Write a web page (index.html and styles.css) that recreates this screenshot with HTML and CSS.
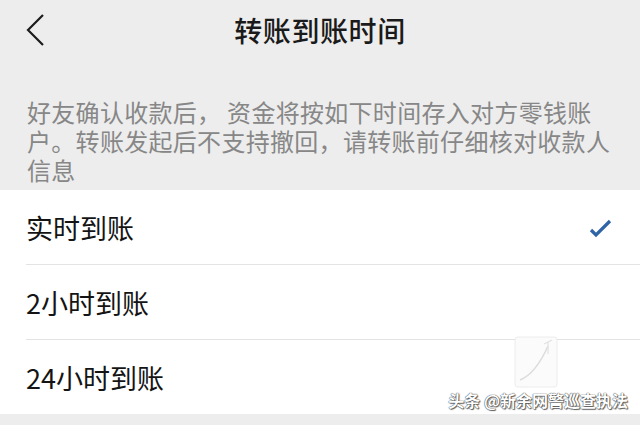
FILE: index.html
```html
<!DOCTYPE html>
<html lang="zh-CN">
<head>
    <meta charset="UTF-8">
    <meta name="viewport" content="width=device-width, initial-scale=1.0">
    <title>转账到账时间</title>
    <link rel="stylesheet" href="styles.css">
</head>
<body>

    <!-- Top bar with back button -->
    <div class="topbar">
        <a class="back" href="#">
            <svg width="20" height="34" viewBox="0 0 20 34">
                <polyline points="17,2 2,17 17,32" fill="none" stroke="#1c1c1c" stroke-width="2.2" stroke-linejoin="miter"/>
            </svg>
        </a>
        <div class="title">转账到账时间</div>
    </div>

    <p class="note">好友确认收款后， 资金将按如下时间存入对方零钱账户。转账发起后不支持撤回，请转账前仔细核对收款人信息</p>

    <!-- Arrival time options -->
    <ul class="options">
        <li class="option">
            <span>实时到账</span>
            <svg class="check" width="24" height="20" viewBox="0 0 24 20">
                <polyline points="2,11 7,16 21,2" fill="none" stroke="#2f64a6" stroke-width="3.2"/>
            </svg>
        </li>
        <li class="option"><span>2小时到账</span></li>
        <li class="option"><span>24小时到账</span></li>
    </ul>

    <div class="watermark">
        <svg class="wm-logo" width="44" height="52" viewBox="0 0 44 52">
            <rect x="1" y="1" width="42" height="50" rx="3" fill="#fbfbfb" stroke="#ececec"/>
            <path d="M6 44 C16 40 26 28 34 10" fill="none" stroke="#dcdcdc" stroke-width="1.5"/>
            <path d="M30 8 L38 4 M34 6 L34 18" fill="none" stroke="#e2e2e2" stroke-width="1.2"/>
        </svg>
        <div class="wm-text">头条 @新余网警巡查执法</div>
    </div>

</body>
</html>
```

FILE: styles.css
```css
body {
    margin: 0;
    background-color: #ededed;
    font-family: "Noto Sans CJK SC", "Noto Sans", sans-serif;
    position: relative;
    height: 425px;
    overflow: hidden;
}
.topbar {
    height: 60px;
    display: flex;
    align-items: center;
    justify-content: center;
    position: relative;
}
.back {
    position: absolute;
    left: 26px;
    top: 13px;
    display: block;
    height: 34px;
}
.title {
    font-size: 28px;
    font-weight: 500;
    color: #1a1a1a;
    letter-spacing: 0.6px;
}
.note {
    margin: 0;
    padding: 37px 27px 6px 27px;
    width: 586px;
    font-size: 24px;
    line-height: 29px;
    letter-spacing: 0.3px;
    color: #878787;
}
.options {
    list-style: none;
    margin: 0;
    padding: 0;
    background-color: #fff;
}
.option {
    margin-left: 26px;
    padding-right: 27px;
    height: 74px;
    display: flex;
    align-items: center;
    justify-content: space-between;
    border-bottom: 1px solid #e3e3e3;
    font-size: 27px;
    color: #141414;
}
.option:last-child {
    border-bottom: none;
}
.check {
    margin-top: 4px;
}
.watermark {
    position: absolute;
    right: 12px;
    bottom: 13px;
    display: flex;
    flex-direction: column;
    align-items: flex-end;
}
.wm-logo {
    display: block;
    margin-right: 70px;
    margin-bottom: 0;
}
.wm-text {
    font-size: 16px;
    font-weight: 700;
    color: #fff;
    text-shadow: 0 0 1px #444, 0 0 1px #444, 1px 1px 1px #666;
}
```
